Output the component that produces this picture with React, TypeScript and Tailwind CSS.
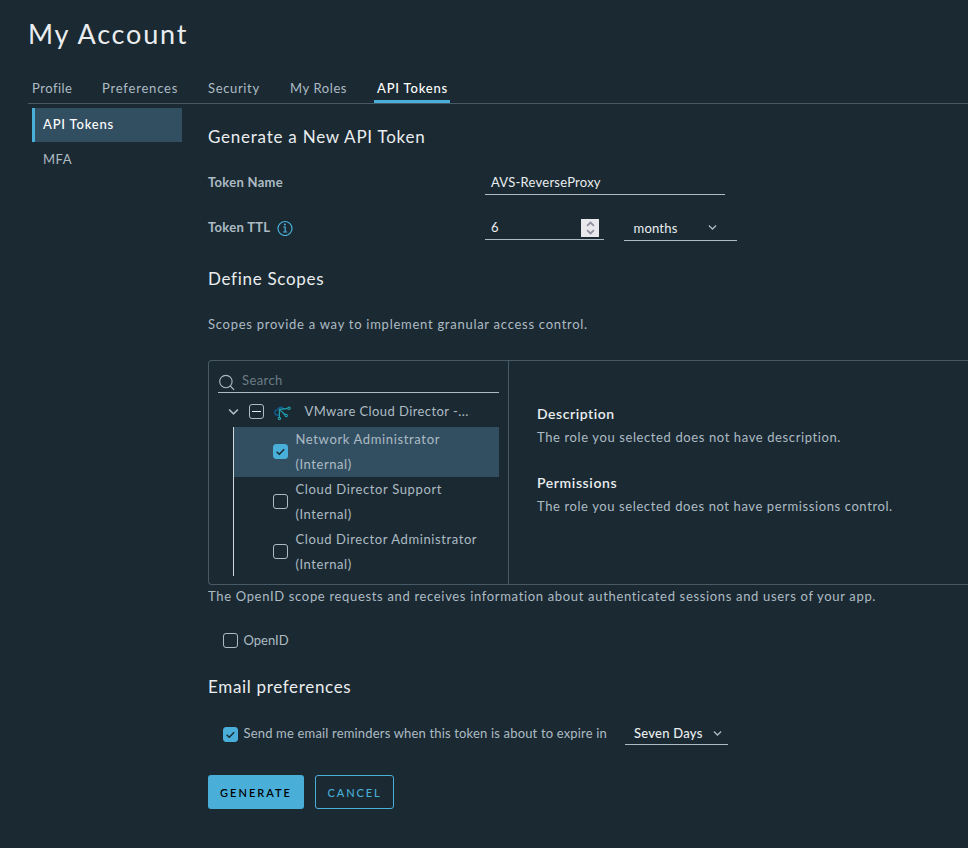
import type { ReactNode } from "react";

function Chevron({ className }: { className: string }) {
  return (
    <svg viewBox="0 0 10 7" className={className} fill="none" stroke="currentColor">
      <path d="M1 1.2 5 5.2 9 1.2" />
    </svg>
  );
}

function Checkbox({ checked = false, mixed = false }: { checked?: boolean; mixed?: boolean }) {
  return (
    <span
      className={`flex size-[15px] shrink-0 items-center justify-center rounded-[3px] border ${
        checked ? "border-[#49afd9] bg-[#49afd9]" : "border-[#adbbc4]"
      }`}
    >
      {checked && (
        <svg viewBox="0 0 13 13" className="size-[13px]" fill="none" stroke="#1b2a32" strokeWidth="1.5">
          <path d="M2.6 6.7 5.3 9.2 10.2 4.3" />
        </svg>
      )}
      {mixed && <span className="h-px w-[9px] bg-[#e9ecef]" />}
    </span>
  );
}

function Tab({ className, children }: { className: string; children: ReactNode }) {
  return <span className={`shrink-0 whitespace-nowrap pt-[8px] leading-4 ${className}`}>{children}</span>;
}

function Role({ name, tracking, checked }: { name: string; tracking: string; checked?: boolean }) {
  return (
    <div className={`flex h-[50px] items-center pl-[39px] ${checked ? "bg-[#324f62]" : ""}`}>
      <span className="flex pb-[2px]">
        <Checkbox checked={checked} />
      </span>
      <div className="ml-[7.5px] whitespace-nowrap leading-[25px]">
        <div className={tracking}>{name}</div>
        <div className="tracking-[0.55px]">(Internal)</div>
      </div>
    </div>
  );
}

export default function App() {
  return (
    <div className="h-[848px] w-[968px] overflow-hidden bg-[#1b2a32] font-['Lato',sans-serif] text-[13px] text-[#adbbc4]">
      <header className="h-[72px] pl-[28px] pt-[18px] text-[27px] leading-8 tracking-[1.8px] text-[#eaedf0]">
        My Account
      </header>
      <nav className="ml-[28px] flex h-[32px] border-b border-[#495a67] pl-[4px]">
        <Tab className="w-[70px] tracking-[0.5px]">Profile</Tab>
        <Tab className="w-[106px] tracking-[0.8px]">Preferences</Tab>
        <Tab className="w-[82px] tracking-[0.65px]">Security</Tab>
        <Tab className="w-[84px] tracking-[0.6px]">My Roles</Tab>
        <Tab className="w-[76px] border-b-[3px] border-[#49afd9] pl-[3px] font-medium tracking-[0.8px] text-white">
          API Tokens
        </Tab>
      </nav>

      <div className="flex">
        <aside className="w-[208px] shrink-0 pl-[32px] pt-[4px]">
          <div className="flex h-[34px] w-[150px] items-center border-l-[3px] border-[#49afd9] bg-[#324f62] pl-[8px] font-medium tracking-[0.8px] text-white">
            API Tokens
          </div>
          <div className="flex h-[36px] items-center pl-[11px] tracking-[0.5px]">MFA</div>
        </aside>

        <main className="w-[760px] shrink-0">
          <h2 className="flex h-[66px] items-center text-[17px] tracking-[0.76px] text-[#eaedf0]">
            Generate a New API Token
          </h2>

          <div className="flex h-[25px]">
            <label className="w-[277px] font-bold leading-[25px] tracking-[0.3px]">Token Name</label>
            <div className="w-[240px] border-b border-[#adbbc4] pl-[6px] leading-[25px] tracking-[0.25px] text-[#eaedf0]">
              AVS-ReverseProxy
            </div>
          </div>

          <div className="mt-[20px] flex h-[26px] items-start">
            <div className="flex h-[25px] w-[277px] items-center gap-[7px] font-bold">
              <span className="tracking-[0.3px]">Token TTL</span>
              <svg viewBox="0 0 16 16" className="size-4" fill="none" stroke="#49afd9">
                <circle cx="8" cy="8.5" r="7" strokeWidth="1.2" />
                <path d="M6.2 7h2v4.8M6 12h4.2" strokeWidth="1.2" />
                <circle cx="7.9" cy="4.6" r="1" fill="#49afd9" stroke="none" />
              </svg>
            </div>
            <div className="flex h-[25px] w-[119px] border-b border-[#adbbc4] pl-[6px] text-[#eaedf0]">
              <span className="w-[90px] leading-[25px]">6</span>
              <span className="mt-[4px] flex h-[18px] w-[18px] flex-col items-center justify-between bg-[#e9e9ed] py-[2px] text-[#8f8f9d]">
                <Chevron className="h-[6px] w-[9px] rotate-180 stroke-2" />
                <Chevron className="h-[6px] w-[9px] stroke-2" />
              </span>
            </div>
            <div className="ml-[20px] flex h-[26px] w-[113px] items-center border-b border-[#adbbc4] pl-[9.5px] text-[#eaedf0]">
              <span className="w-[74.5px] pt-[2px] tracking-[0.2px]">months</span>
              <Chevron className="mb-px h-[7px] w-[9px] stroke-[1.4] text-[#adbbc4]" />
            </div>
          </div>

          <h2 className="flex h-[76px] items-center text-[17px] tracking-[0.7px] text-[#eaedf0]">Define Scopes</h2>
          <p className="flex h-[14px] items-center pt-[2px] tracking-[0.73px]">
            Scopes provide a way to implement granular access control.
          </p>

          <section className="mt-[29px] flex h-[225px] rounded-l-[4px] border border-r-0 border-[#495a67]">
            <div className="w-[300px] shrink-0 border-r border-[#495a67] pl-[9px]">
              <div className="flex h-[32px] w-[281px] items-end border-b border-[#adbbc4]">
                <svg viewBox="0 0 17 17" className="mb-px size-[17px]" fill="none" stroke="#adbbc4" strokeWidth="1.1">
                  <circle cx="7.9" cy="7.6" r="6.2" />
                  <path d="m12.3 12 3.8 3.8" />
                </svg>
                <span className="ml-[7px] pb-[2px] tracking-[0.4px] text-[#6b7b86]">Search</span>
              </div>
              <div className="flex h-[34px] items-center pl-[10px] pt-[4px]">
                <Chevron className="h-[8px] w-[11px] stroke-[1.5]" />
                <span className="ml-[10px] flex pb-[2px]">
                  <Checkbox mixed />
                </span>
                <svg viewBox="0 0 17 17" className="ml-[10px] size-[17px]" fill="none">
                  <path d="M5 11H3.4a2.6 2.6 0 0 1 0-5.2C4 3 8 2 10 5.4M9 10h2.5" stroke="#0f5c93" strokeWidth="1.3" />
                  <path d="M5.4 14.5V5.4L14.5 4.3M5.4 5.4 11.6 11.2" stroke="#20a0ac" strokeWidth="1.2" />
                  <g fill="#1b2a32" stroke="#20a0ac" strokeWidth="1.1">
                    <circle cx="5.4" cy="14.6" r="1.2" />
                    <circle cx="15" cy="4.3" r="1.2" />
                    <circle cx="12.2" cy="11.4" r="1.2" />
                  </g>
                </svg>
                <span className="ml-[13.5px] tracking-[0.42px]">VMware Cloud Director -...</span>
              </div>
              <div className="ml-[15px] h-[149px] w-[266px] border-l border-[#d0d8dd]">
                <Role name="Network Administrator" tracking="tracking-[0.64px]" checked />
                <Role name="Cloud Director Support" tracking="tracking-[0.63px]" />
                <Role name="Cloud Director Administrator" tracking="tracking-[0.6px]" />
              </div>
            </div>
            <div className="pl-[28px] pt-[42px]">
              <h3 className="text-[14px] font-semibold leading-[22px] tracking-[0.55px] text-[#eaedf0]">Description</h3>
              <p className="leading-[25px] tracking-[0.61px]">The role you selected does not have description.</p>
              <h3 className="mt-[22px] text-[14px] font-semibold leading-[22px] tracking-[0.6px] text-[#eaedf0]">
                Permissions
              </h3>
              <p className="leading-[25px] tracking-[0.6px]">The role you selected does not have permissions control.</p>
            </div>
          </section>

          <p className="h-[24px] leading-[22px] tracking-[0.67px]">
            The OpenID scope requests and receives information about authenticated sessions and users of your app.
          </p>
          <div className="flex h-[63px] items-center gap-[5.5px] pl-[15px]">
            <Checkbox />
            <span className="tracking-[0px]">OpenID</span>
          </div>
          <h2 className="flex h-[30px] items-center text-[17px] tracking-[0.67px] text-[#eaedf0]">Email preferences</h2>
          <div className="flex h-[65px] items-center gap-[5px] pl-[15px]">
            <Checkbox checked />
            <span className="w-[377px] pb-px pl-[0.5px] tracking-[0.17px]">
              Send me email reminders when this token is about to expire in
            </span>
            <div className="mb-[2px] flex h-[23px] w-[103px] items-center border-b border-[#adbbc4] pl-[9px] pt-px text-[#eaedf0]">
              <span className="w-[79px] font-medium tracking-[0.25px]">Seven Days</span>
              <Chevron className="h-[7px] w-[9px] stroke-[1.4] text-[#adbbc4]" />
            </div>
          </div>
          <div className="mt-[8px] flex gap-[11px] text-[11px]">
            <button className="h-[34px] w-[96px] rounded-[3px] bg-[#49afd9] pt-[2px] font-semibold tracking-[2px] text-black">
              GENERATE
            </button>
            <button className="h-[34px] w-[79px] rounded-[3px] border border-[#49afd9] pt-[2px] font-medium tracking-[1.9px] text-[#49afd9]">
              CANCEL
            </button>
          </div>
        </main>
      </div>
    </div>
  );
}
